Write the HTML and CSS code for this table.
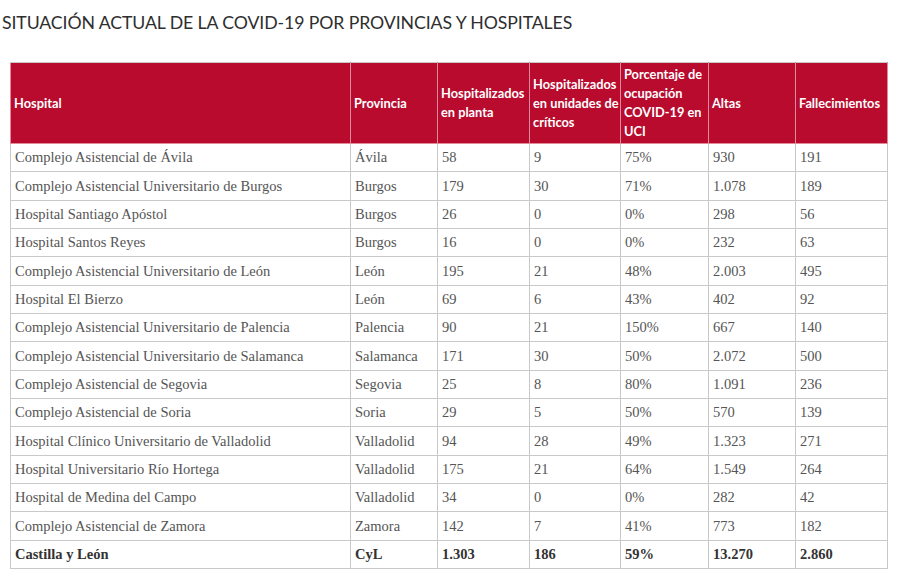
FILE: index.html
```html
<!DOCTYPE html>
<html lang="es">
<head>
<meta charset="utf-8">
<title>Situación COVID-19</title>
<link rel="stylesheet" href="styles.css">
</head>
<body>
<h2 class="title">SITUACIÓN ACTUAL DE LA COVID-19 POR PROVINCIAS Y HOSPITALES</h2>
<table class="covid">
<colgroup>
<col class="c1"><col class="c2"><col class="c3"><col class="c4"><col class="c5"><col class="c6"><col class="c7">
</colgroup>
<thead>
<tr>
<th>Hospital</th>
<th>Provincia</th>
<th>Hospitalizados en planta</th>
<th>Hospitalizados en unidades de críticos</th>
<th>Porcentaje de ocupación COVID-19 en UCI</th>
<th>Altas</th>
<th>Fallecimientos</th>
</tr>
</thead>
<tbody>
<tr><td>Complejo Asistencial de Ávila</td><td>Ávila</td><td>58</td><td>9</td><td>75%</td><td>930</td><td>191</td></tr>
<tr><td>Complejo Asistencial Universitario de Burgos</td><td>Burgos</td><td>179</td><td>30</td><td>71%</td><td>1.078</td><td>189</td></tr>
<tr><td>Hospital Santiago Apóstol</td><td>Burgos</td><td>26</td><td>0</td><td>0%</td><td>298</td><td>56</td></tr>
<tr><td>Hospital Santos Reyes</td><td>Burgos</td><td>16</td><td>0</td><td>0%</td><td>232</td><td>63</td></tr>
<tr><td>Complejo Asistencial Universitario de León</td><td>León</td><td>195</td><td>21</td><td>48%</td><td>2.003</td><td>495</td></tr>
<tr><td>Hospital El Bierzo</td><td>León</td><td>69</td><td>6</td><td>43%</td><td>402</td><td>92</td></tr>
<tr><td>Complejo Asistencial Universitario de Palencia</td><td>Palencia</td><td>90</td><td>21</td><td>150%</td><td>667</td><td>140</td></tr>
<tr><td>Complejo Asistencial Universitario de Salamanca</td><td>Salamanca</td><td>171</td><td>30</td><td>50%</td><td>2.072</td><td>500</td></tr>
<tr><td>Complejo Asistencial de Segovia</td><td>Segovia</td><td>25</td><td>8</td><td>80%</td><td>1.091</td><td>236</td></tr>
<tr><td>Complejo Asistencial de Soria</td><td>Soria</td><td>29</td><td>5</td><td>50%</td><td>570</td><td>139</td></tr>
<tr><td>Hospital Clínico Universitario de Valladolid</td><td>Valladolid</td><td>94</td><td>28</td><td>49%</td><td>1.323</td><td>271</td></tr>
<tr><td>Hospital Universitario Río Hortega</td><td>Valladolid</td><td>175</td><td>21</td><td>64%</td><td>1.549</td><td>264</td></tr>
<tr><td>Hospital de Medina del Campo</td><td>Valladolid</td><td>34</td><td>0</td><td>0%</td><td>282</td><td>42</td></tr>
<tr><td>Complejo Asistencial de Zamora</td><td>Zamora</td><td>142</td><td>7</td><td>41%</td><td>773</td><td>182</td></tr>
<tr class="total"><td>Castilla y León</td><td>CyL</td><td>1.303</td><td>186</td><td>59%</td><td>13.270</td><td>2.860</td></tr>
</tbody>
</table>
</body>
</html>
```
FILE: styles.css
```css
html, body {
  margin: 0;
  padding: 0;
  background: #fff;
}
body {
  padding: 12px 0 0 2px;
}
.title {
  margin: 0 0 28px 0;
  font-family: Lato, "Open Sans", sans-serif;
  font-weight: 400;
  font-size: 17.7px;
  line-height: 22px;
  color: #2e2e2e;
  letter-spacing: -0.1px;
}
.covid {
  margin-left: 8px;
  width: 877px;
  border-collapse: collapse;
  table-layout: fixed;
  border: 1px solid #c9c9c9;
}
.c1 { width: 340px; }
.c2 { width: 87px; }
.c3 { width: 92px; }
.c4 { width: 91px; }
.c5 { width: 88px; }
.c6 { width: 87px; }
.c7 { width: 92px; }
.covid th {
  background: #b80b2e;
  color: #fff;
  font-family: Lato, "Open Sans", sans-serif;
  font-weight: 700;
  font-size: 12.8px;
  line-height: 19px;
  text-align: left;
  vertical-align: middle;
  padding: 1px 0 1px 3px;
  height: 78px;
  border: 1px solid #e08a9c;
  border-top-color: #c9c9c9;
}
.covid td {
  font-family: "Liberation Serif", "DejaVu Serif", serif;
  font-size: 14.5px;
  color: #555;
  height: 27.35px;
  padding: 0 4px;
  border: 1px solid #c9c9c9;
  vertical-align: middle;
  white-space: nowrap;
}
.covid .total td {
  font-weight: 700;
  color: #333;
}
```
